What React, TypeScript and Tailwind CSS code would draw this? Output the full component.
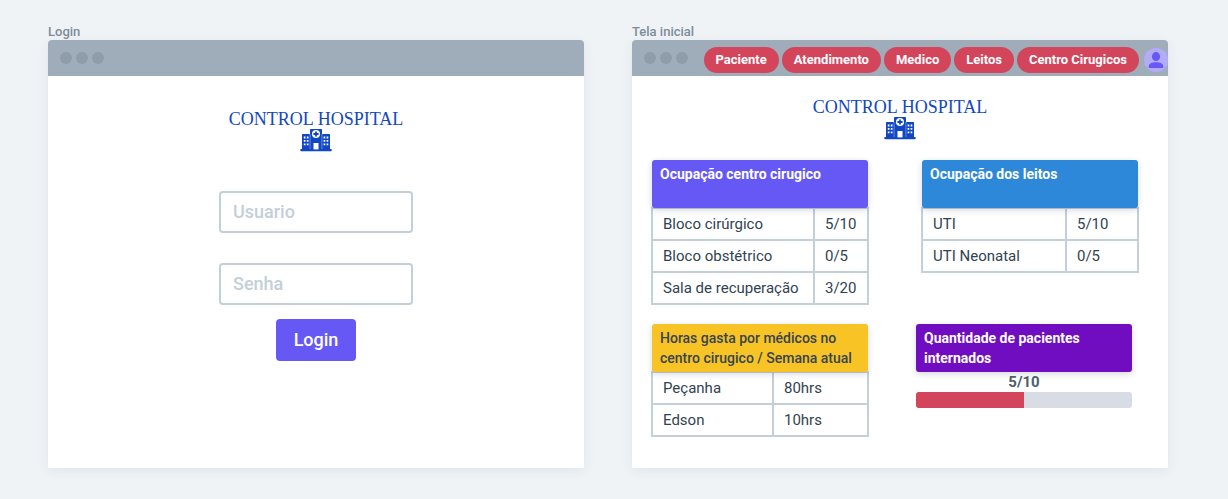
import type { ReactNode } from "react";

type Row = { name: string; value: string };

const menu = ["Paciente", "Atendimento", "Medico", "Leitos", "Centro Cirugicos"];

const surgery: Row[] = [
  { name: "Bloco cirúrgico", value: "5/10" },
  { name: "Bloco obstétrico", value: "0/5" },
  { name: "Sala de recuperação", value: "3/20" },
];

const beds: Row[] = [
  { name: "UTI", value: "5/10" },
  { name: "UTI Neonatal", value: "0/5" },
];

const hours: Row[] = [
  { name: "Peçanha", value: "80hrs" },
  { name: "Edson", value: "10hrs" },
];

function Logo() {
  return (
    <div className="flex flex-col items-center text-[#1247c4]">
      <span className="font-['Liberation_Serif',serif] text-lg leading-[22px] whitespace-nowrap">
        CONTROL HOSPITAL
      </span>
      <svg className="-mt-0.5" width="32" height="24" viewBox="0 0 32 24" aria-hidden="true">
        <g fill="#1247c4">
          <rect x="2" y="6" width="8" height="16" rx="0.6" />
          <rect x="22" y="6" width="8" height="16" rx="0.6" />
          <rect x="10" y="1" width="12" height="21" rx="0.8" />
          <rect x="0.3" y="21" width="31.4" height="2.2" rx="0.8" />
        </g>
        <g fill="#fff">
          <rect x="9.8" y="6" width="0.5" height="15" opacity="0.7" />
          <rect x="21.7" y="6" width="0.5" height="15" opacity="0.7" />
          <circle cx="16" cy="6" r="4" />
          <rect x="13.5" y="15" width="5" height="6.4" />
          <path d="M3.8 8.6h1.7v1.8h-1.7zM6.8 8.6h1.7v1.8h-1.7zM3.8 12h1.7v1.8h-1.7zM6.8 12h1.7v1.8h-1.7zM3.8 15.4h1.7v1.8h-1.7zM6.8 15.4h1.7v1.8h-1.7z" />
          <path d="M23.6 8.6h1.7v1.8h-1.7zM26.6 8.6h1.7v1.8h-1.7zM23.6 12h1.7v1.8h-1.7zM26.6 12h1.7v1.8h-1.7zM23.6 15.4h1.7v1.8h-1.7zM26.6 15.4h1.7v1.8h-1.7z" />
        </g>
        <path fill="#1247c4" d="M15.1 3.4h1.8v1.7h1.7v1.8h-1.7v1.7h-1.8V6.9h-1.7V5.1h1.7z" />
      </svg>
    </div>
  );
}

function Frame({ title, bar, children }: { title: string; bar?: ReactNode; children: ReactNode }) {
  return (
    <section>
      <h2 className="text-[13px] leading-4 font-medium text-[#7d8c99]">{title}</h2>
      <div className="overflow-hidden rounded-t bg-white shadow-[0_3px_12px_rgba(40,60,80,0.07)]">
        <header className="flex h-9 items-center justify-between bg-[#9eadb9] pl-3">
          <div className="flex gap-1">
            <i className="size-3 rounded-full bg-[#8e9dab]" />
            <i className="size-3 rounded-full bg-[#8e9dab]" />
            <i className="size-3 rounded-full bg-[#8e9dab]" />
          </div>
          {bar}
        </header>
        <div className="min-h-98">{children}</div>
      </div>
    </section>
  );
}

function Field({ label, type }: { label: string; type: string }) {
  return (
    <input
      type={type}
      aria-label={label}
      placeholder={label}
      className="mb-[30px] h-[42px] w-[194px] rounded border-2 border-[#c3cfd9] bg-white px-3 pb-0.5 text-lg font-medium text-[#36454f] outline-none placeholder:text-[#c3cfd9]"
    />
  );
}

function CardTitle({ className, children }: { className: string; children: ReactNode }) {
  return (
    <h3
      className={`relative min-h-12 rounded-[3px] px-2 py-1 text-sm leading-5 shadow-[0_2px_6px_rgba(40,60,80,0.2)] ${className}`}
    >
      {children}
    </h3>
  );
}

function DataTable({ rows, split }: { rows: Row[]; split: string }) {
  return (
    <div className="-mx-px -mt-px">
      <table className="w-full table-fixed border-collapse text-[15px] leading-5 text-[#314351]">
        <colgroup>
          <col className={split} />
          <col />
        </colgroup>
        <tbody>
          {rows.map((row) => (
            <tr key={row.name} className="h-8">
              <td className="border-2 border-[#c3cfd9] px-2.5 whitespace-nowrap">{row.name}</td>
              <td className="border-2 border-[#c3cfd9] px-2.5 whitespace-nowrap">{row.value}</td>
            </tr>
          ))}
        </tbody>
      </table>
    </div>
  );
}

function Menu() {
  return (
    <nav className="flex items-center gap-[3px] pt-1">
      {menu.map((item) => (
        <button
          key={item}
          type="button"
          className="h-[26px] rounded-full bg-[#d3455b] px-3 text-[13px] font-bold whitespace-nowrap text-white"
        >
          {item}
        </button>
      ))}
      <button type="button" aria-label="Perfil" className="ml-0.5 size-6 rounded-full bg-[#b2abfa]">
        <svg width="24" height="24" viewBox="0 0 24 24" fill="#6558f5" aria-hidden="true">
          <ellipse cx="12" cy="8.6" rx="4.1" ry="4.5" />
          <path d="M4.8 20v-1.8c0-2.6 3.2-4 7.2-4s7.2 1.4 7.2 4V20z" />
        </svg>
      </button>
    </nav>
  );
}

export default function App() {
  return (
    <main className="grid min-h-screen grid-cols-2 gap-12 bg-[#eff3f6] pt-6 pr-15 pb-7 pl-12 font-[Roboto,sans-serif]">
      <Frame title="Login">
        <form className="flex flex-col items-center pt-8" onSubmit={(e) => e.preventDefault()}>
          <div className="mb-[39px]">
            <Logo />
          </div>
          <Field label="Usuario" type="text" />
          <Field label="Senha" type="password" />
          <button
            type="submit"
            className="-mt-4 h-[42px] rounded bg-[#6558f5] px-[18px] text-lg font-medium text-white"
          >
            Login
          </button>
        </form>
      </Frame>

      <Frame title="Tela inicial" bar={<Menu />}>
        <div className="pt-5">
          <Logo />
          <div className="mt-5 grid grid-cols-2 gap-[54px] pr-[30px] pl-5">
            <div>
              <CardTitle className="bg-[#6558f5] font-bold text-white">
                Ocupação centro cirugico
              </CardTitle>
              <DataTable rows={surgery} split="w-3/4" />
            </div>
            <div>
              <CardTitle className="bg-[#2d88d9] font-bold text-white">
                Ocupação dos leitos
              </CardTitle>
              <DataTable rows={beds} split="w-2/3" />
            </div>
          </div>
          <div className="mt-[19px] grid grid-cols-2 gap-12 pr-9 pl-5">
            <div>
              <CardTitle className="bg-[#f8c324] font-medium text-[#36454f]">
                Horas gasta por médicos no centro cirugico / Semana atual
              </CardTitle>
              <DataTable rows={hours} split="w-[56%]" />
            </div>
            <div>
              <CardTitle className="bg-[#710dc1] font-bold text-white">
                Quantidade de pacientes internados
              </CardTitle>
              <p className="text-center text-[15px] leading-5 font-bold text-[#4d606b]">5/10</p>
              <div
                role="progressbar"
                aria-label="Pacientes internados"
                aria-valuenow={5}
                aria-valuemin={0}
                aria-valuemax={10}
                className="h-4 overflow-hidden rounded-[3px] bg-[#d8dde5]"
              >
                <div className="h-full w-1/2 bg-[#d3455b]" />
              </div>
            </div>
          </div>
        </div>
      </Frame>
    </main>
  );
}
